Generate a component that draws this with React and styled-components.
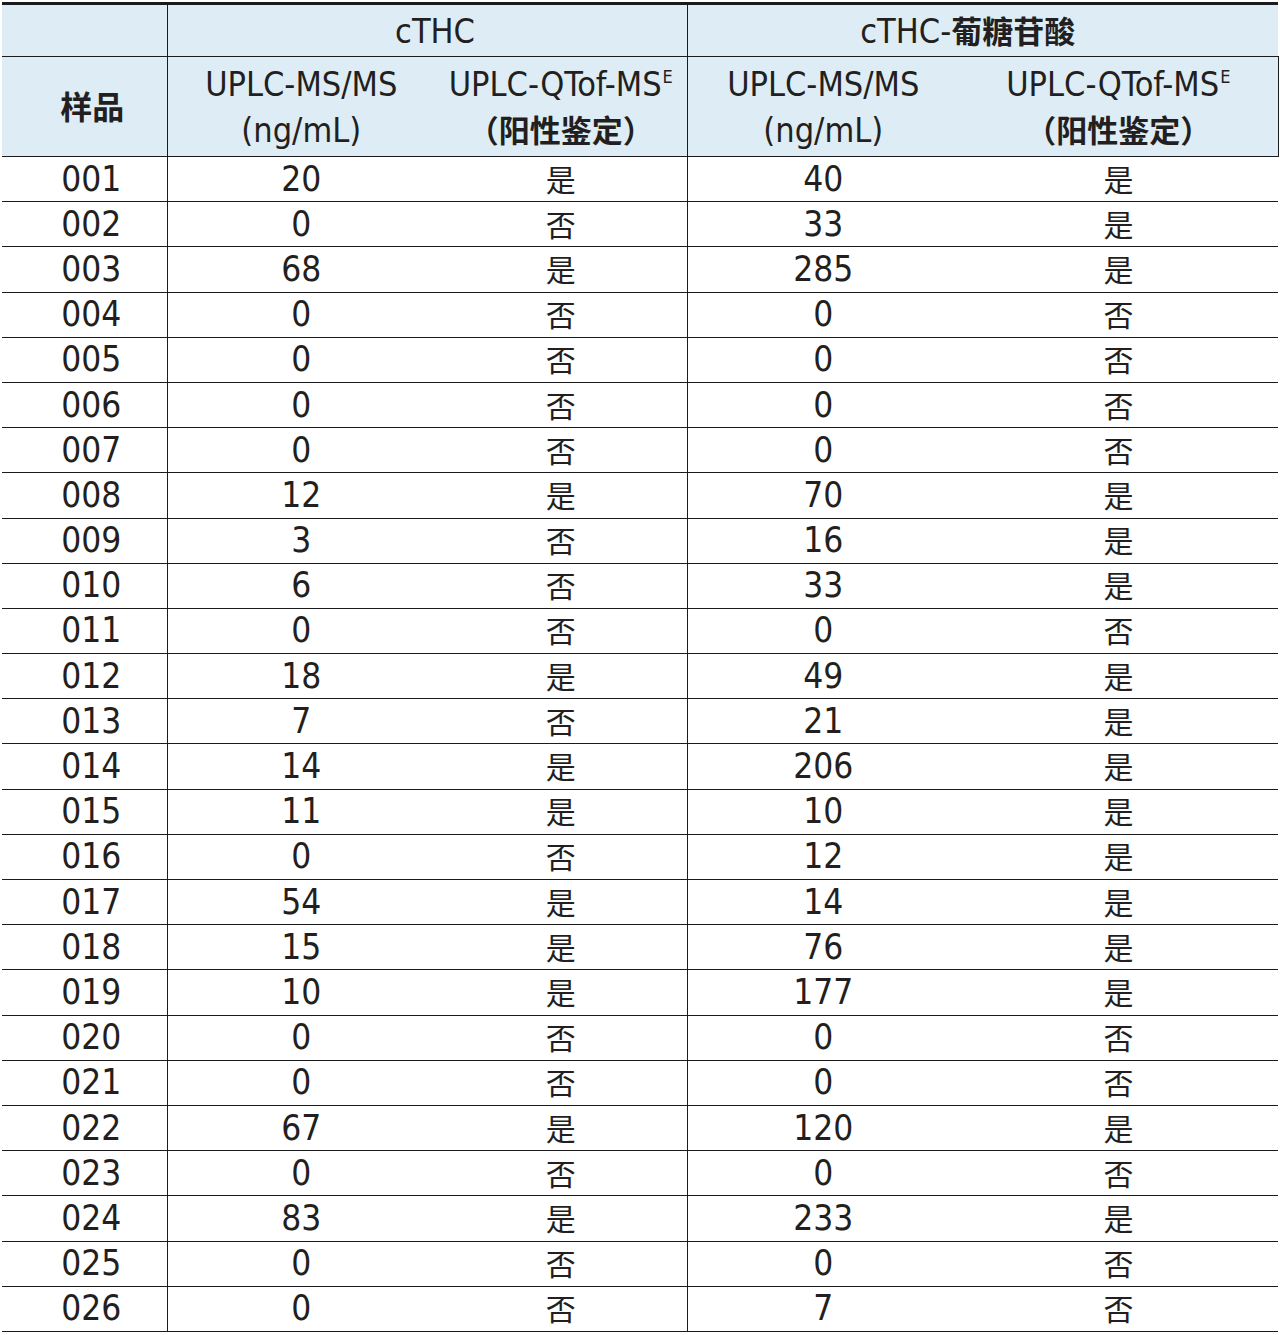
import React from "react";
import styled, { createGlobalStyle } from "styled-components";

const GlobalStyle = createGlobalStyle`
  body {
    margin: 0;
    background: #ffffff;
    color: #231f20;
    font-family: "DejaVu Sans Condensed", "DejaVu Sans", "Noto Sans CJK SC", sans-serif;
  }
`;

const Page = styled.div`
  padding: 2px 2px 0 2px;
`;

const Table = styled.table`
  width: 1276px;
  border-collapse: collapse;
  table-layout: fixed;
  border-top: 3px solid #1b1b1d;
`;

const HeadRow = styled.tr`
  height: ${(p) => p.$h}px;
`;

const HeadCell = styled.th`
  background: #deedf5;
  font-weight: normal;
  font-size: 34px;
  line-height: 46px;
  padding: 0 ${(p) => p.$padR || 0}px 0 ${(p) => p.$padL || 0}px;
  text-align: center;
  vertical-align: middle;
  border-bottom: 1px solid #1b1b1d;
  border-right: ${(p) => (p.$divider ? "1px solid #1b1b1d" : "none")};
`;

const Cjk = styled.span`
  font-family: "Noto Sans CJK SC", sans-serif;
  font-weight: 700;
  font-size: ${(p) => p.$size || 30}px;
  line-height: 1;
`;

const Sup = styled.sup`
  font-size: 18px;
  line-height: 0;
  vertical-align: 13px;
  margin-left: 1px;
`;

const Row = styled.tr`
  height: 45.2px;
`;

const Cell = styled.td`
  padding: 0 0 0 ${(p) => p.$padL || 0}px;
  text-align: center;
  vertical-align: middle;
  font-size: 35px;
  line-height: 1;
  border-bottom: 1px solid #1b1b1d;
  border-right: ${(p) => (p.$divider ? "1px solid #1b1b1d" : "none")};
`;

const Answer = styled.span`
  font-family: "Noto Sans CJK SC", sans-serif;
  font-size: 30px;
  line-height: 1;
`;

const rows = [
  ["001", "20", "是", "40", "是"],
  ["002", "0", "否", "33", "是"],
  ["003", "68", "是", "285", "是"],
  ["004", "0", "否", "0", "否"],
  ["005", "0", "否", "0", "否"],
  ["006", "0", "否", "0", "否"],
  ["007", "0", "否", "0", "否"],
  ["008", "12", "是", "70", "是"],
  ["009", "3", "否", "16", "是"],
  ["010", "6", "否", "33", "是"],
  ["011", "0", "否", "0", "否"],
  ["012", "18", "是", "49", "是"],
  ["013", "7", "否", "21", "是"],
  ["014", "14", "是", "206", "是"],
  ["015", "11", "是", "10", "是"],
  ["016", "0", "否", "12", "是"],
  ["017", "54", "是", "14", "是"],
  ["018", "15", "是", "76", "是"],
  ["019", "10", "是", "177", "是"],
  ["020", "0", "否", "0", "否"],
  ["021", "0", "否", "0", "否"],
  ["022", "67", "是", "120", "是"],
  ["023", "0", "否", "0", "否"],
  ["024", "83", "是", "233", "是"],
  ["025", "0", "否", "0", "否"],
  ["026", "0", "否", "7", "否"],
];

function MethodHeads() {
  return (
    <>
      <HeadCell>
        UPLC-MS/MS
        <br />
        (ng/mL)
      </HeadCell>
      <HeadCell $divider>
        UPLC-QTof-MS<Sup>E</Sup>
        <br />
        <Cjk $size={31}>（阳性鉴定）</Cjk>
      </HeadCell>
    </>
  );
}

export default function App() {
  return (
    <Page>
      <GlobalStyle />
      <Table>
        <colgroup>
          <col style={{ width: 165 }} />
          <col style={{ width: 268 }} />
          <col style={{ width: 252 }} />
          <col style={{ width: 272 }} />
          <col style={{ width: 319 }} />
        </colgroup>
        <thead>
          <HeadRow $h={53}>
            <HeadCell $divider />
            <HeadCell colSpan={2} $divider $padL={16}>
              cTHC
            </HeadCell>
            <HeadCell colSpan={2} $padR={30}>
              cTHC-<Cjk $size={31}>葡糖苷酸</Cjk>
            </HeadCell>
          </HeadRow>
          <HeadRow $h={100}>
            <HeadCell $divider $padL={16}>
              <Cjk $size={32}>样品</Cjk>
            </HeadCell>
            <MethodHeads />
            <MethodHeads />
          </HeadRow>
        </thead>
        <tbody>
          {rows.map(([id, a, b, c, d]) => (
            <Row key={id}>
              <Cell $divider $padL={14}>
                {id}
              </Cell>
              <Cell>{a}</Cell>
              <Cell $divider>
                <Answer>{b}</Answer>
              </Cell>
              <Cell>{c}</Cell>
              <Cell>
                <Answer>{d}</Answer>
              </Cell>
            </Row>
          ))}
        </tbody>
      </Table>
    </Page>
  );
}
